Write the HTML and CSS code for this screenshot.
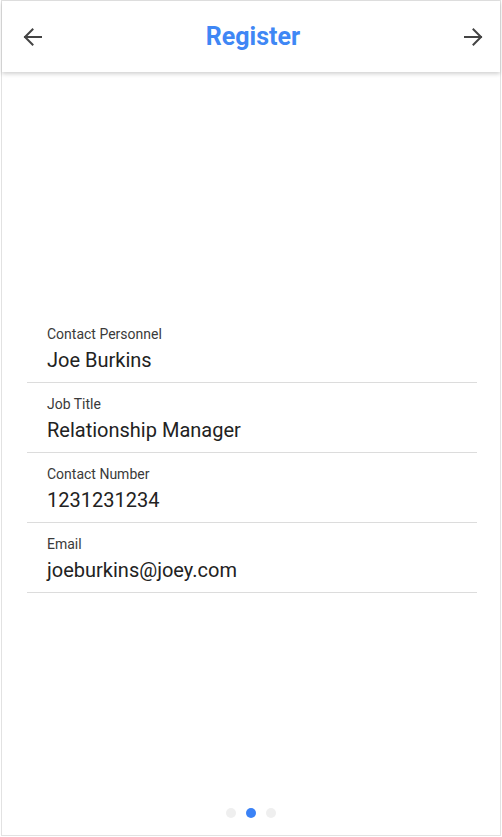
FILE: index.html
```html
<!DOCTYPE html>
<html>
<head>
<meta charset="utf-8">
<link rel="stylesheet" href="styles.css">
</head>
<body>
<div class="frame">
  <header class="topbar">
    <button class="nav-btn" aria-label="Back">
      <svg width="20" height="20" viewBox="0 0 20 20"><path d="M18 10H2M9.5 2.5L2 10l7.5 7.5" fill="none" stroke="#444" stroke-width="2" stroke-linecap="square"/></svg>
    </button>
    <h1 class="title">Register</h1>
    <button class="nav-btn" aria-label="Forward">
      <svg width="20" height="20" viewBox="0 0 20 20"><path d="M2 10h16M10.5 2.5L18 10l-7.5 7.5" fill="none" stroke="#444" stroke-width="2" stroke-linecap="square"/></svg>
    </button>
  </header>
  <main class="content">
    <div class="fields">
      <div class="field">
        <div class="label">Contact Personnel</div>
        <div class="value">Joe Burkins</div>
      </div>
      <div class="field">
        <div class="label">Job Title</div>
        <div class="value">Relationship Manager</div>
      </div>
      <div class="field">
        <div class="label">Contact Number</div>
        <div class="value">1231231234</div>
      </div>
      <div class="field">
        <div class="label">Email</div>
        <div class="value">joeburkins@joey.com</div>
      </div>
    </div>
    <div class="dots">
      <span class="dot"></span>
      <span class="dot active"></span>
      <span class="dot"></span>
    </div>
  </main>
</div>
</body>
</html>
```
FILE: styles.css
```css
* { box-sizing: border-box; }
html, body { margin: 0; padding: 0; background: #fff; }
body { font-family: Roboto, "Liberation Sans", sans-serif; }
.frame {
  margin-left: 1px;
  width: 500px;
  height: 836px;
  border: 1px solid #e2e2e2;
  display: flex;
  flex-direction: column;
  background: #fff;
}
.topbar {
  height: 71px;
  flex: none;
  display: flex;
  align-items: center;
  justify-content: space-between;
  padding: 0 15px 0 19px;
  box-shadow: 0 2px 4px rgba(0,0,0,0.18);
  position: relative;
  z-index: 1;
}
.nav-btn {
  background: none;
  border: 0;
  padding: 2px;
  width: 24px;
  height: 24px;
  display: flex;
  align-items: center;
  justify-content: center;
}
.title {
  margin: 0 0 1px;
  font-size: 25px;
  font-weight: 700;
  color: #3f87f5;
}
.content {
  flex: 1;
  position: relative;
  display: flex;
  flex-direction: column;
  justify-content: center;
  padding: 0 23px 2px 25px;
}
.fields { display: flex; flex-direction: column; }
.field {
  padding: 13px 20px 10px;
  border-bottom: 1px solid #dcdcdc;
  display: flex;
  flex-direction: column;
  gap: 6px;
}
.label {
  font-size: 14px;
  line-height: 16px;
  color: #3a3a3a;
}
.value {
  font-size: 20px;
  line-height: 24px;
  color: #222;
}
.dots {
  position: absolute;
  left: 0;
  right: 0;
  bottom: 17px;
  display: flex;
  justify-content: center;
  gap: 10px;
}
.dot {
  width: 10px;
  height: 10px;
  border-radius: 50%;
  background: #efefef;
}
.dot.active { background: #3b82f6; }
```
